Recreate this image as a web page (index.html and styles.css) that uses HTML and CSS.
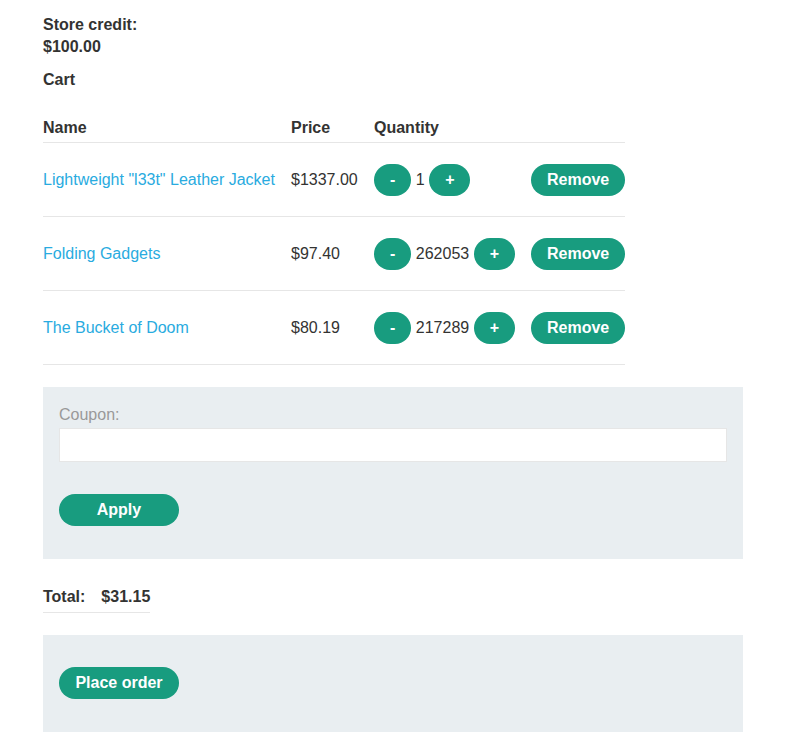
FILE: index.html
```html
<!DOCTYPE html>
<html>
<head>
<meta charset="utf-8">
<link rel="stylesheet" href="styles.css">
</head>
<body>
<div class="container">
  <p class="credit"><strong>Store credit:<br>$100.00</strong></p>
  <p class="cart-title"><strong>Cart</strong></p>
  <table class="cart">
    <colgroup><col class="c1"><col class="c2"><col class="c3"><col class="c4"></colgroup>
    <thead>
      <tr><th>Name</th><th>Price</th><th>Quantity</th><th></th></tr>
    </thead>
    <tbody>
      <tr>
        <td><a href="#">Lightweight "l33t" Leather Jacket</a></td>
        <td>$1337.00</td>
        <td><button class="btn">-</button> <span class="qty">1</span> <button class="btn">+</button></td>
        <td><button class="btn">Remove</button></td>
      </tr>
      <tr>
        <td><a href="#">Folding Gadgets</a></td>
        <td>$97.40</td>
        <td><button class="btn">-</button> <span class="qty">262053</span> <button class="btn">+</button></td>
        <td><button class="btn">Remove</button></td>
      </tr>
      <tr>
        <td><a href="#">The Bucket of Doom</a></td>
        <td>$80.19</td>
        <td><button class="btn">-</button> <span class="qty">217289</span> <button class="btn">+</button></td>
        <td><button class="btn">Remove</button></td>
      </tr>
    </tbody>
  </table>
  <form class="panel coupon">
    <label class="coupon-label">Coupon:</label>
    <input class="coupon-input" type="text">
    <button class="btn wide" type="button">Apply</button>
  </form>
  <table class="total">
    <tr><th>Total:</th><th>$31.15</th></tr>
  </table>
  <div class="panel order">
    <button class="btn wide" type="button">Place order</button>
  </div>
</div>
</body>
</html>
```
FILE: styles.css
```css
html, body {
  margin: 0;
  padding: 0;
  background: #fff;
}
body {
  font-family: "Liberation Sans", Arial, sans-serif;
  font-size: 16px;
  line-height: 22px;
  color: #333332;
}
.container {
  padding-left: 43px;
  width: 700px;
}
.credit {
  margin: 14px 0 0;
}
.cart-title {
  margin: 11px 0 0;
}
.cart {
  border-collapse: collapse;
  table-layout: fixed;
  width: 582px;
  margin-top: 25px;
}
.c1 { width: 248px; }
.c2 { width: 83px; }
.c3 { width: 157px; }
.c4 { width: 94px; }
.cart th {
  text-align: left;
  font-weight: bold;
  padding: 1px 0 3px 0;
  border-bottom: 1px solid #e6e6e6;
}
.cart td {
  height: 73px;
  padding: 0 16px 0 0;
  vertical-align: middle;
  border-bottom: 1px solid #e6e6e6;
  white-space: nowrap;
}
.cart td:last-child {
  padding-right: 0;
}
.cart a {
  color: #29abe0;
  text-decoration: none;
}
.qty {
  display: inline-block;
  vertical-align: middle;
  line-height: 32px;
}
.btn {
  display: inline-block;
  height: 32px;
  padding: 0 16px;
  border: 0;
  border-radius: 16px;
  background: #189c7f;
  color: #fff;
  font-family: "Liberation Sans", Arial, sans-serif;
  font-size: 16px;
  font-weight: bold;
  line-height: 32px;
  vertical-align: middle;
  cursor: pointer;
}
.btn.wide {
  min-width: 120px;
}
.panel {
  background: #e9eef1;
  padding: 16px;
}
.coupon {
  margin: 22px 0 0;
  padding-bottom: 33px;
  padding-top: 16px;
}
.coupon-label {
  display: block;
  color: #999;
  line-height: 24px;
  height: 25px;
}
.coupon-input {
  display: block;
  box-sizing: border-box;
  width: 668px;
  height: 34px;
  margin: 0 0 32px;
  border: 1px solid #e6e6e6;
  background: #fff;
  font-size: 16px;
}
.total {
  border-collapse: collapse;
  margin-top: 27px;
}
.total th {
  text-align: left;
  padding: 0 16px 4px 0;
  border-bottom: 1px solid #e6e6e6;
}
.total th:last-child {
  padding-right: 0;
}
.order {
  margin-top: 22px;
  padding-top: 32px;
  padding-bottom: 33px;
}
```
